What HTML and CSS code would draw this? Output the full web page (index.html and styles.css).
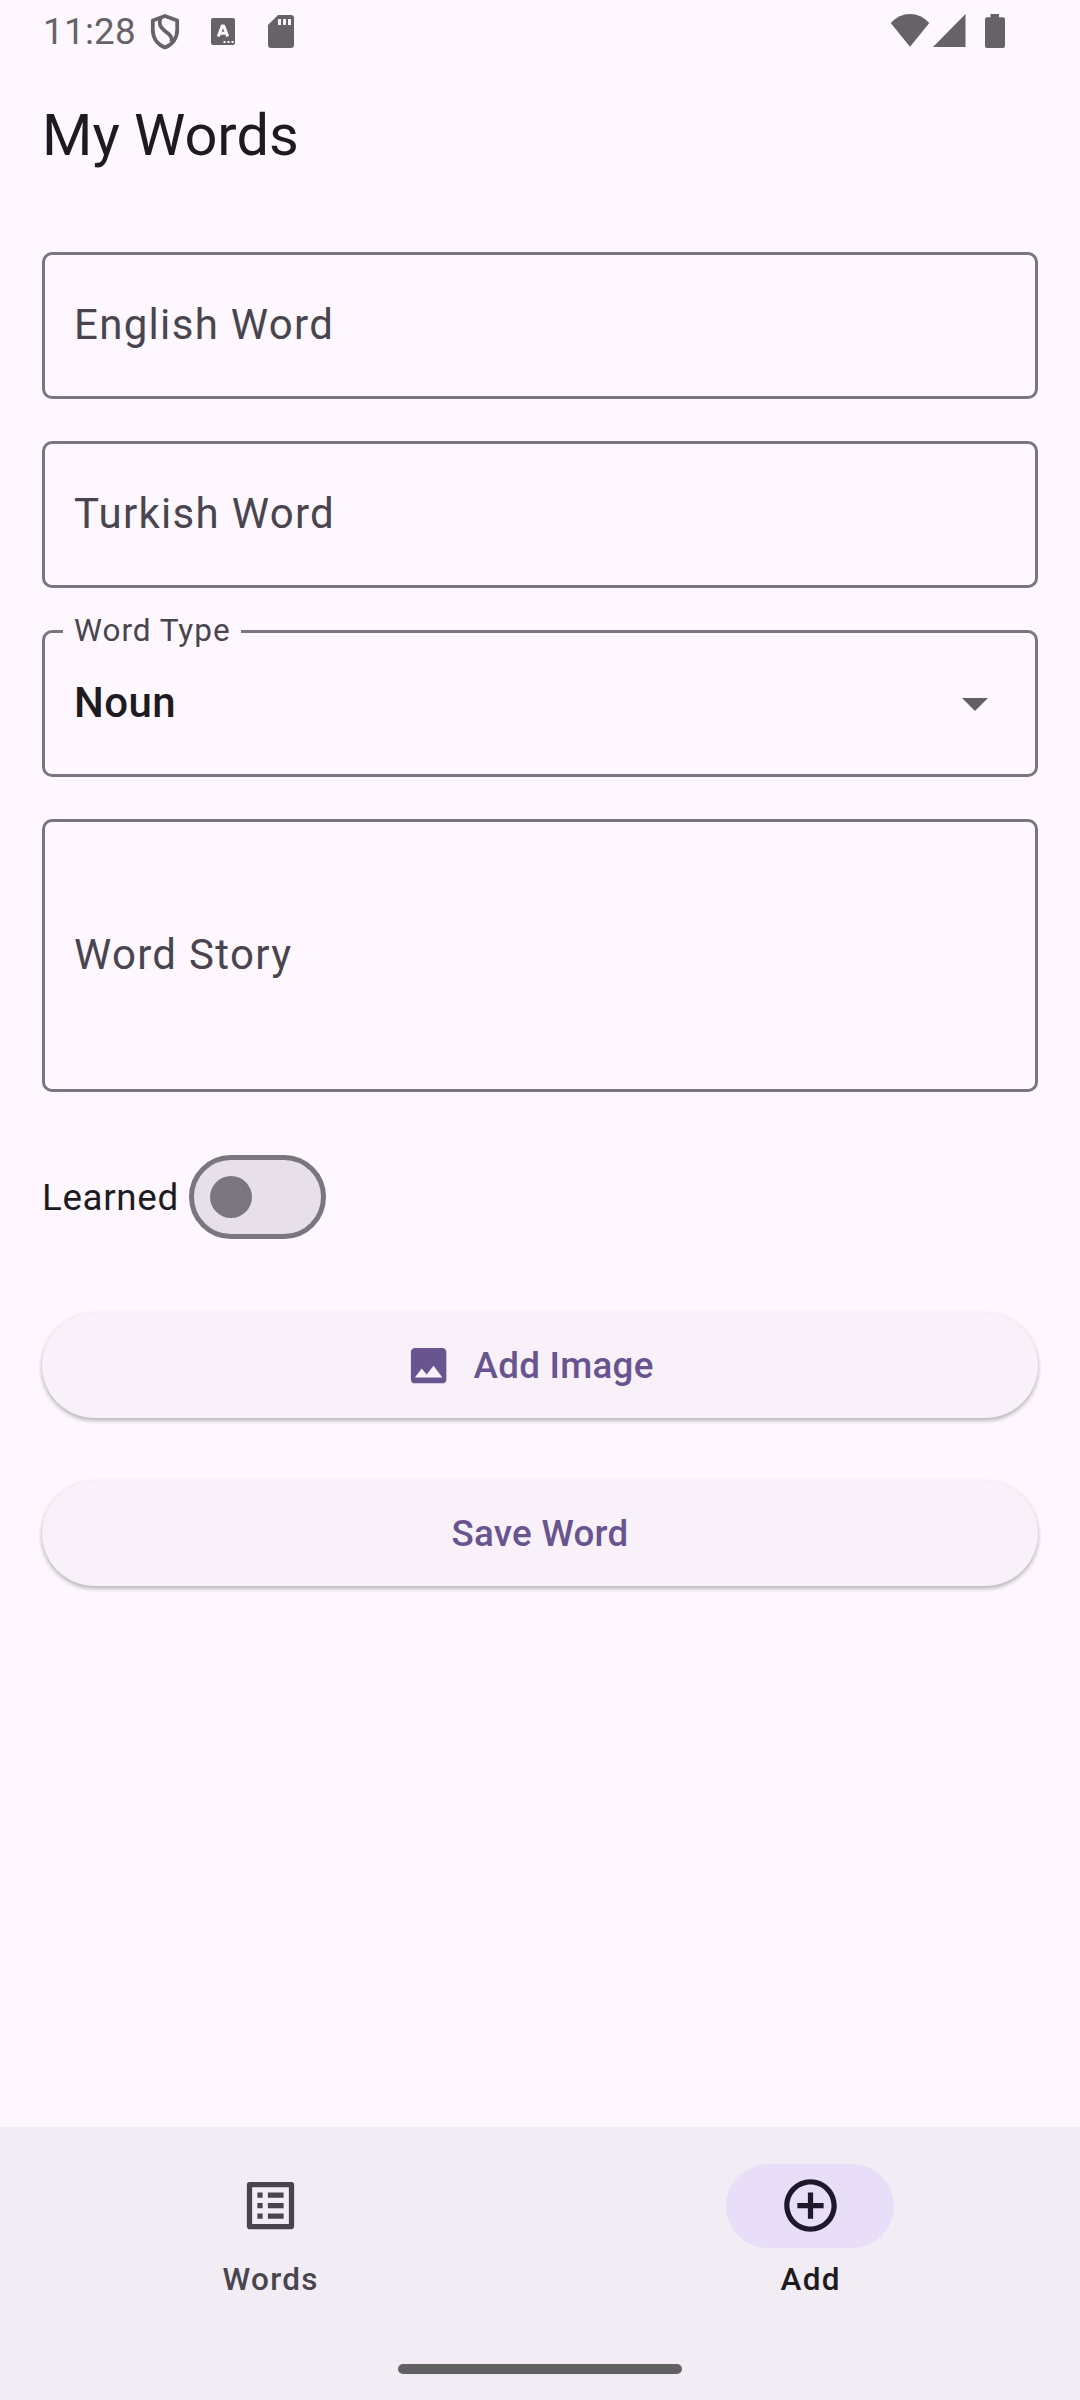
FILE: index.html
```html
<!DOCTYPE html>
<html lang="en">
<head>
<meta charset="utf-8">
<title>My Words</title>
<link rel="stylesheet" href="styles.css">
</head>
<body>
<div class="screen">
  <div class="status-bar">
    <span class="clock">11:28</span>
    <svg class="shield" width="30" height="36" viewBox="0 0 30 36"><path d="M15 2 27.200 6.500V16C27.200 24 22.500 30.500 15 33.500C7.500 30.500 2.800 24 2.800 16V6.500Z" fill="none" stroke="currentColor" stroke-width="3.800" stroke-linejoin="round"/><path d="M10.500 4C8.500 10 10 13 15 17C20.500 21 22.500 23.500 21.500 28" fill="none" stroke="currentColor" stroke-width="3.800"/></svg>
    <svg class="letter-tile" width="24" height="27" viewBox="0 0 24 27"><rect width="24" height="27" rx="2" fill="currentColor"/><path d="M7.300 18.500 11.200 8H12.800L16.700 18.500M9 15.300H15" fill="none" stroke="#fef7ff" stroke-width="3" stroke-linejoin="round"/><path d="M12.500 23h2v2h-2zM16.500 23h2v2h-2zM20.500 23h2v2h-2z" fill="#fef7ff"/></svg>
    <svg class="sd-card" width="26" height="33" viewBox="0 0 26 33"><path d="M10 0H23Q26 0 26 3V30Q26 33 23 33H3Q0 33 0 30V10Z" fill="currentColor"/><path d="M10 4h3v6h-3zM15 4h3v6h-3zM20 4h3v6h-3z" fill="#fef7ff"/></svg>
    <svg class="wifi" width="40" height="33" viewBox="0 0 40 33"><path d="M.700 9Q9 0 20 0T39.300 9L20 32.700Z" fill="currentColor"/></svg>
    <svg class="signal" width="33" height="33" viewBox="0 0 33 33"><path d="M0 33 32.500 0V33Z" fill="currentColor"/></svg>
    <svg class="battery" width="20" height="34" viewBox="0 0 20 34"><path d="M5.500 0H14V3.300H18Q20 3.300 20 5.300V32Q20 34 18 34H2Q0 34 0 32V5.300Q0 3.300 2 3.300H5.500Z" fill="currentColor"/></svg>
  </div>
  <h1 class="title">My Words</h1>
  <form class="form">
    <div class="field">English Word</div>
    <div class="field">Turkish Word</div>
    <div class="field select">
      <span class="floating-label">Word Type</span>
      <span class="value">Noun</span>
      <svg class="caret" width="26" height="13" viewBox="0 0 26 13"><path d="M0 0H26L13 13Z" fill="#616161"/></svg>
    </div>
    <div class="field story">Word Story</div>
    <div class="learned"><span>Learned</span><span class="switch"><span class="thumb"></span></span></div>
    <button class="button with-icon" type="button">
      <svg class="image-icon" viewBox="0 0 24 24"><path d="M21 19V5c0-1.100-.900-2-2-2H5c-1.100 0-2 .900-2 2v14c0 1.100.900 2 2 2h14c1.100 0 2-.900 2-2z" fill="currentColor"/><path d="M8.500 13.500l2.500 3.010L14.500 12l4.500 6H5z" fill="#f8f1fa"/></svg>
      <span>Add Image</span>
    </button>
    <button class="button" type="button"><span>Save Word</span></button>
  </form>
  <nav class="nav">
    <div class="tabs">
      <div class="tab">
        <span class="pill"><svg class="tab-icon" viewBox="0 0 24 24"><path fill="currentColor" d="M19 5v14H5V5h14m1.100-2H3.900c-.500 0-.900.400-.900.900v16.200c0 .400.400.900.900.900h16.200c.400 0 .900-.500.900-.900V3.900c0-.500-.500-.900-.900-.900zM11 7h6v2h-6V7zm0 4h6v2h-6v-2zm0 4h6v2h-6zM7 7h2v2H7zm0 4h2v2H7zm0 4h2v2H7z"/></svg></span>
        <span class="tab-label">Words</span>
      </div>
      <div class="tab active">
        <span class="pill"><svg class="tab-icon" viewBox="0 0 24 24"><path fill="currentColor" d="M13 7h-2v4H7v2h4v4h2v-4h4v-2h-4V7zm-1-5C6.480 2 2 6.480 2 12s4.480 10 10 10 10-4.480 10-10S17.520 2 12 2zm0 18c-4.410 0-8-3.590-8-8s3.590-8 8-8 8 3.590 8 8-3.590 8-8 8z"/></svg></span>
        <span class="tab-label">Add</span>
      </div>
    </div>
    <div class="handle"></div>
  </nav>
</div>
</body>
</html>
```

FILE: styles.css
```css
* { box-sizing: border-box; }
body { margin: 0; font-family: Roboto, sans-serif; background: #fef7ff; color: #1d1b20; }
svg { display: block; flex: none; }
.screen { width: 1080px; height: 2400px; display: flex; flex-direction: column; }

.status-bar { height: 63px; padding: 14px 75px 0 43px; display: flex; align-items: flex-start; color: #666367; }
.clock { width: 107px; font-size: 36.75px; line-height: 36px; letter-spacing: .3px; }
.letter-tile { margin: 4px 0 0 31px; }
.sd-card { margin: 1px 0 0 33px; }
.wifi { margin-left: auto; }
.signal { margin-left: 3px; }
.battery { margin-left: 19px; }

.title { margin: 0; height: 147px; padding: 0 42px; font-size: 57.75px; font-weight: 400; line-height: 145px; }

.form { flex: 1; margin: 0; padding: 42px 42px 0; display: flex; flex-direction: column; }
.field { position: relative; height: 147px; margin-bottom: 42px; padding: 0 47px 2px 29px; border: 3px solid #7b757f; border-radius: 10px; display: flex; align-items: center; justify-content: space-between; color: #49454e; font-size: 42px; line-height: 50px; letter-spacing: 1.3125px; }
.story { height: 273px; }
.floating-label { position: absolute; left: 18px; top: -21px; padding: 0 10.500px 0 11px; background: #fef7ff; font-size: 31.5px; line-height: 38px; letter-spacing: .98px; }
.value { color: #1d1b20; font-weight: 500; letter-spacing: .39px; }
.caret { margin-top: 4px; }

.learned { height: 126px; display: flex; align-items: center; gap: 10.5px; font-size: 36.75px; letter-spacing: .656px; }
.switch { width: 136.5px; height: 84px; padding-left: 16px; border: 5.25px solid #7b757f; border-radius: 42px; background: #e7e0e8; display: flex; align-items: center; }
.thumb { width: 42px; height: 42px; border-radius: 50%; background: #7b757f; }

.button { height: 105px; margin: 52.5px 0 10.5px; padding: 1px 0 0; border: 0; border-radius: 53px; background: #f8f1fa; color: #68548e; display: flex; align-items: center; justify-content: center; gap: 21px; font: 500 36.75px/44px Roboto, sans-serif; letter-spacing: .2625px; box-shadow: 0 3px 4px rgba(0, 0, 0, .2), 0 1px 5px rgba(0, 0, 0, .12); }
.with-icon { padding-right: 21px; }
.image-icon { width: 47.25px; height: 47.25px; }

.nav { height: 273px; background: #f2ecf4; display: flex; flex-direction: column; align-items: center; }
.tabs { height: 237px; align-self: stretch; display: flex; }
.tab { flex: 1; padding-top: 37px; display: flex; flex-direction: column; align-items: center; gap: 13px; color: #49454e; font-size: 31.5px; line-height: 38px; font-weight: 500; letter-spacing: 1.3125px; }
.tab-label { padding-left: 1.3px; }
.active { color: #1d1b20; }
.pill { width: 168px; height: 84px; padding-bottom: 1px; border-radius: 42px; display: flex; align-items: center; justify-content: center; }
.active .pill { background: #e9def8; color: #1f182b; }
.tab-icon { width: 63px; height: 63px; }
.handle { width: 284px; height: 10px; border-radius: 5px; background: #616063; }
```
